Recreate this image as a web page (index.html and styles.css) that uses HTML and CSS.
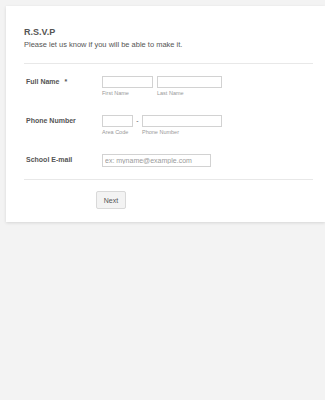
FILE: index.html
```html
<!DOCTYPE html>
<html lang="en">
<head>
    <meta charset="UTF-8">
    <meta name="viewport" content="width=device-width, initial-scale=1.0">
    <title>R.S.V.P</title>
    <link rel="stylesheet" href="styles.css">
</head>
<body>
    <div class="card">
        <div class="header">
            <h2 class="title">R.S.V.P</h2>
            <p class="subtitle">Please let us know if you will be able to make it.</p>
        </div>

        <form class="fields">
            <div class="field">
                <label class="label">Full Name <span class="req">*</span></label>
                <div class="inputs">
                    <div class="part">
                        <input type="text" class="box first">
                        <span class="sub">First Name</span>
                    </div>
                    <div class="part">
                        <input type="text" class="box last">
                        <span class="sub">Last Name</span>
                    </div>
                </div>
            </div>

            <div class="field">
                <label class="label">Phone Number</label>
                <div class="inputs phone">
                    <div class="part">
                        <input type="text" class="box area">
                        <span class="sub">Area Code</span>
                    </div>
                    <span class="dash">-</span>
                    <div class="part">
                        <input type="text" class="box number">
                        <span class="sub">Phone Number</span>
                    </div>
                </div>
            </div>

            <div class="field">
                <label class="label">School E-mail</label>
                <div class="inputs">
                    <input type="text" class="box email" placeholder="ex: myname@example.com">
                </div>
            </div>
        </form>

        <div class="footer">
            <button class="next">Next</button>
        </div>
    </div>
</body>
</html>
```

FILE: styles.css
```css
body {
    font-family: "Liberation Sans", Arial, sans-serif;
    margin: 0;
    padding: 6px 0 0 6px;
    background-color: #f3f3f3;
    height: 400px;
    box-sizing: border-box;
    overflow: hidden;
}

.card {
    background-color: #fff;
    padding: 0 12px 13px 18px;
    box-shadow: 0 1px 3px rgba(0, 0, 0, 0.12);
}

.header {
    padding: 20px 0 13px;
    border-bottom: 1px solid #e8e8e8;
}

.title {
    margin: 0;
    font-size: 9px;
    line-height: 12px;
    font-weight: bold;
    color: #555;
}

.subtitle {
    margin: 2px 0 0;
    font-size: 7.5px;
    line-height: 10px;
    color: #555;
}

.fields {
    display: flex;
    flex-direction: column;
    gap: 18px;
    padding-top: 12px;
    margin: 0;
}

.field {
    display: flex;
}

.label {
    width: 76px;
    padding-left: 2px;
    font-size: 7px;
    line-height: 12px;
    font-weight: bold;
    color: #555;
}

.req {
    margin-left: 3px;
}

.inputs {
    display: flex;
}

.part {
    display: flex;
    flex-direction: column;
}

.box {
    box-sizing: border-box;
    height: 12px;
    margin: 0;
    padding: 0 2px;
    border: 1px solid #d2d2d2;
    border-radius: 0;
    background: #fff;
    font-family: inherit;
    font-size: 7px;
    color: #555;
    outline: none;
}

.box::placeholder {
    color: #9a9a9a;
}

.first {
    width: 51px;
    margin-right: 4px;
}

.last {
    width: 65px;
}

.area {
    width: 31px;
}

.number {
    width: 80px;
}

.email {
    width: 109px;
    height: 13px;
}

.dash {
    width: 9px;
    text-align: center;
    font-size: 7px;
    line-height: 12px;
    color: #555;
}

.sub {
    margin-top: 1px;
    font-size: 5.5px;
    line-height: 8px;
    color: #999;
}

.footer {
    display: flex;
    margin-top: 12px;
    padding-top: 11px;
    border-top: 1px solid #e8e8e8;
}

.next {
    margin-left: 72px;
    width: 30px;
    height: 18px;
    padding: 0;
    background-color: #f3f3f3;
    border: 1px solid #d9d9d9;
    border-radius: 2px;
    font-family: inherit;
    font-size: 7px;
    color: #555;
}
```
